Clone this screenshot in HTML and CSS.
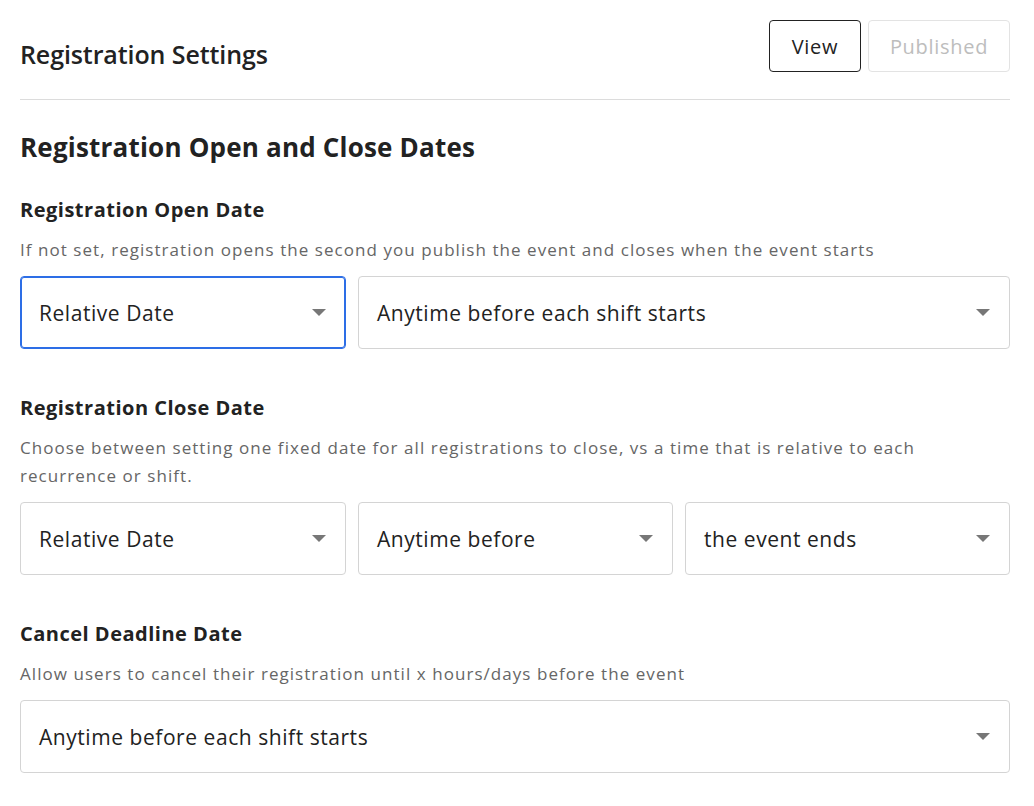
FILE: index.html
```html
<!DOCTYPE html>
<html lang="en">
<head>
    <meta charset="UTF-8">
    <meta name="viewport" content="width=device-width, initial-scale=1.0">
    <title>Registration Settings</title>
    <link rel="stylesheet" href="styles.css">
</head>
<body>
    <div class="page">
        <div class="page-header">
            <h1>Registration Settings</h1>
            <div class="header-actions">
                <button class="btn btn-view">View</button>
                <button class="btn btn-published" disabled>Published</button>
            </div>
        </div>

        <h2>Registration Open and Close Dates</h2>

        <div class="field">
            <h3>Registration Open Date</h3>
            <p class="hint">If not set, registration opens the second you publish the event and closes when the event starts</p>
            <div class="select-row row-open">
                <div class="select focused"><span>Relative Date</span><i class="caret"></i></div>
                <div class="select"><span>Anytime before each shift starts</span><i class="caret"></i></div>
            </div>
        </div>

        <div class="field">
            <h3>Registration Close Date</h3>
            <p class="hint">Choose between setting one fixed date for all registrations to close, vs a time that is relative to each recurrence or shift.</p>
            <div class="select-row row-close">
                <div class="select"><span>Relative Date</span><i class="caret"></i></div>
                <div class="select"><span>Anytime before</span><i class="caret"></i></div>
                <div class="select"><span>the event ends</span><i class="caret"></i></div>
            </div>
        </div>

        <div class="field">
            <h3>Cancel Deadline Date</h3>
            <p class="hint">Allow users to cancel their registration until x hours/days before the event</p>
            <div class="select-row">
                <div class="select"><span>Anytime before each shift starts</span><i class="caret"></i></div>
            </div>
        </div>
    </div>
</body>
</html>
```

FILE: styles.css
```css
body {
    margin: 0;
    font-family: 'Open Sans', 'Noto Sans', sans-serif;
    background: #fff;
    color: #222;
}
.page {
    padding: 20px 24px 0 20px;
}
.page-header {
    display: flex;
    justify-content: space-between;
    align-items: flex-start;
    padding-bottom: 27px;
    border-bottom: 1px solid #dcdcdc;
}
h1 {
    margin: 17px 0 0;
    font-size: 25px;
    line-height: 34px;
    font-weight: 600;
    letter-spacing: -0.1px;
}
.header-actions {
    display: flex;
    gap: 7px;
}
.btn {
    height: 52px;
    font-family: inherit;
    font-size: 20px;
    border-radius: 4px;
    background: #fff;
    padding: 0;
    letter-spacing: 0.7px;
}
.btn-view {
    width: 92px;
    border: 1px solid #222;
    color: #222;
}
.btn-published {
    width: 142px;
    border: 1px solid #e3e3e3;
    color: #bdbdbd;
}
h2 {
    margin: 31px 0 0;
    font-size: 26px;
    line-height: 32px;
    font-weight: 700;
    letter-spacing: 0.2px;
}
.field {
    margin-top: 46px;
}
h2 + .field {
    margin-top: 34px;
}
h3 {
    margin: 0;
    font-size: 20px;
    line-height: 26px;
    font-weight: 700;
    letter-spacing: 0.5px;
}
.hint {
    margin: 13px 0 12px;
    max-width: 960px;
    font-size: 17px;
    line-height: 28px;
    color: #666;
    letter-spacing: 1.05px;
}
.select-row {
    display: grid;
    grid-template-columns: 1fr;
    gap: 12px;
}
.row-open {
    grid-template-columns: 326px 1fr;
}
.row-close {
    grid-template-columns: 326px 315px 1fr;
}
.select {
    height: 73px;
    box-sizing: border-box;
    border: 1px solid #d4d4d4;
    border-radius: 4px;
    display: flex;
    align-items: center;
    justify-content: space-between;
    padding: 0 19px 0 18px;
    font-size: 21px;
    letter-spacing: 0.55px;
    color: #222;
}
.select.focused {
    border-color: #2d6ee6;
    box-shadow: inset 0 0 0 1px #2d6ee6;
}
.caret {
    width: 0;
    height: 0;
    border-left: 7px solid transparent;
    border-right: 7px solid transparent;
    border-top: 7px solid #777;
}
```
